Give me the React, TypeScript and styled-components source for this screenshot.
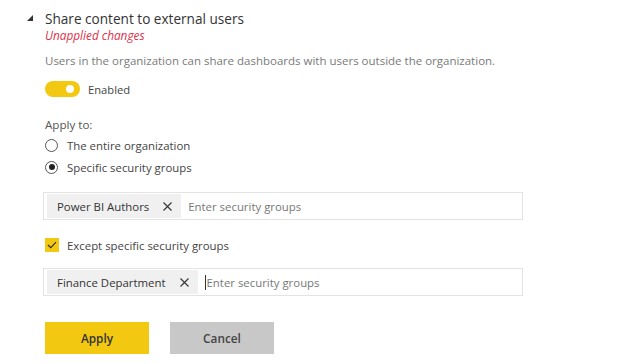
import React from "react";
import styled, { createGlobalStyle } from "styled-components";

const GlobalStyle = createGlobalStyle`
    body {
        margin: 0;
        background: #ffffff;
        font-family: "Open Sans", "Noto Sans", sans-serif;
        color: #333333;
    }
`;

const Page = styled.div`
    padding: 8px 0 0 27px;
    width: 627px;
    height: 364px;
    box-sizing: border-box;
`;

const Header = styled.div`
    display: flex;
    align-items: center;
    height: 20px;
`;

const Caret = styled.span`
    width: 18px;
    display: flex;
    align-items: center;
`;

const Title = styled.h3`
    margin: 0;
    font-size: 13.6px;
    font-weight: 400;
    color: #333333;
`;

const Body = styled.div`
    padding-left: 18px;
    width: 478px;
`;

const Warning = styled.div`
    font-size: 11.8px;
    font-style: italic;
    color: #d9334b;
    margin-top: -1px;
    height: 16px;
`;

const Description = styled.p`
    margin: 10px 0 0;
    font-size: 11.5px;
    color: #7a7a7a;
    white-space: nowrap;
`;

const ToggleRow = styled.label`
    display: flex;
    align-items: center;
    gap: 8px;
    margin-top: 13px;
    font-size: 11.2px;
    color: #444444;
`;

const Toggle = styled.span<{ $on: boolean }>`
    width: 35px;
    height: 16px;
    border-radius: 8px;
    background: ${(p) => (p.$on ? "#f2c811" : "#c8c8c8")};
    position: relative;
    &::after {
        content: "";
        position: absolute;
        top: 4px;
        left: ${(p) => (p.$on ? "21px" : "4px")};
        width: 8px;
        height: 8px;
        border-radius: 50%;
        background: #ffffff;
    }
`;

const SectionLabel = styled.div`
    margin-top: 20px;
    font-size: 11.6px;
    color: #555555;
    height: 17px;
`;

const OptionRow = styled.label`
    display: flex;
    align-items: center;
    gap: 9px;
    font-size: 11.4px;
    color: #444444;
    height: 22px;
`;

const Radio = styled.span<{ $checked: boolean }>`
    width: 11px;
    height: 11px;
    border: 1px solid #555555;
    border-radius: 50%;
    display: flex;
    align-items: center;
    justify-content: center;
    &::after {
        content: "";
        width: 6px;
        height: 6px;
        border-radius: 50%;
        background: ${(p) => (p.$checked ? "#222222" : "transparent")};
    }
`;

const Checkbox = styled.span`
    width: 14px;
    height: 14px;
    background: #f2c811;
    display: flex;
    align-items: center;
    justify-content: center;
`;

const TagInput = styled.div<{ $top: number }>`
    margin-top: ${(p) => p.$top}px;
    height: 28px;
    border: 1px solid #e3e3e3;
    box-sizing: border-box;
    display: flex;
    align-items: center;
    padding: 0 3px;
    gap: 7px;
    width: 480px;
    margin-left: -2px;
`;

const Chip = styled.span`
    height: 24px;
    display: flex;
    align-items: center;
    gap: 14px;
    padding: 0 9px 0 10px;
    background: #f0f0f0;
    font-size: 11.4px;
    color: #333333;
`;

const Placeholder = styled.span<{ $caret?: boolean }>`
    font-size: 11.4px;
    color: #777777;
    border-left: ${(p) => (p.$caret ? "1px solid #333333" : "none")};
    padding-left: ${(p) => (p.$caret ? "1px" : "0")};
`;

const CheckRow = styled(OptionRow)`
    margin-top: 14px;
    gap: 8px;
`;

const Actions = styled.div`
    display: flex;
    gap: 21px;
    margin-top: 26px;
`;

const Button = styled.button<{ $primary?: boolean }>`
    width: 104px;
    height: 32px;
    border: none;
    background: ${(p) => (p.$primary ? "#f2c811" : "#c8c8c8")};
    color: ${(p) => (p.$primary ? "#333333" : "#444444")};
    font-family: "Open Sans", "Noto Sans", sans-serif;
    font-size: 11.8px;
    font-weight: 600;
    cursor: pointer;
`;

const Cross = () => (
    <svg width="9" height="9" viewBox="0 0 9 9">
        <path d="M0.5 0.5 L8.5 8.5 M8.5 0.5 L0.5 8.5" stroke="#333" strokeWidth="1.1" />
    </svg>
);

export default function App() {
    return (
        <>
            <GlobalStyle />
            <Page>
                <Header>
                    <Caret>
                        <svg width="6" height="6" viewBox="0 0 6 6">
                            <path d="M6 0 L6 6 L0 6 Z" fill="#333" />
                        </svg>
                    </Caret>
                    <Title>Share content to external users</Title>
                </Header>
                <Body>
                    <Warning>Unapplied changes</Warning>
                    <Description>
                        Users in the organization can share dashboards with users outside the organization.
                    </Description>
                    <ToggleRow>
                        <Toggle $on={true} />
                        Enabled
                    </ToggleRow>
                    <SectionLabel>Apply to:</SectionLabel>
                    <OptionRow>
                        <Radio $checked={false} />
                        The entire organization
                    </OptionRow>
                    <OptionRow>
                        <Radio $checked={true} />
                        Specific security groups
                    </OptionRow>
                    <TagInput $top={14}>
                        <Chip>
                            Power BI Authors
                            <Cross />
                        </Chip>
                        <Placeholder>Enter security groups</Placeholder>
                    </TagInput>
                    <CheckRow>
                        <Checkbox>
                            <svg width="10" height="8" viewBox="0 0 10 8">
                                <path d="M1 4 L3.8 6.6 L9 1.2" stroke="#333" strokeWidth="1.2" fill="none" />
                            </svg>
                        </Checkbox>
                        Except specific security groups
                    </CheckRow>
                    <TagInput $top={12}>
                        <Chip>
                            Finance Department
                            <Cross />
                        </Chip>
                        <Placeholder $caret>Enter security groups</Placeholder>
                    </TagInput>
                    <Actions>
                        <Button $primary>Apply</Button>
                        <Button>Cancel</Button>
                    </Actions>
                </Body>
            </Page>
        </>
    );
}
